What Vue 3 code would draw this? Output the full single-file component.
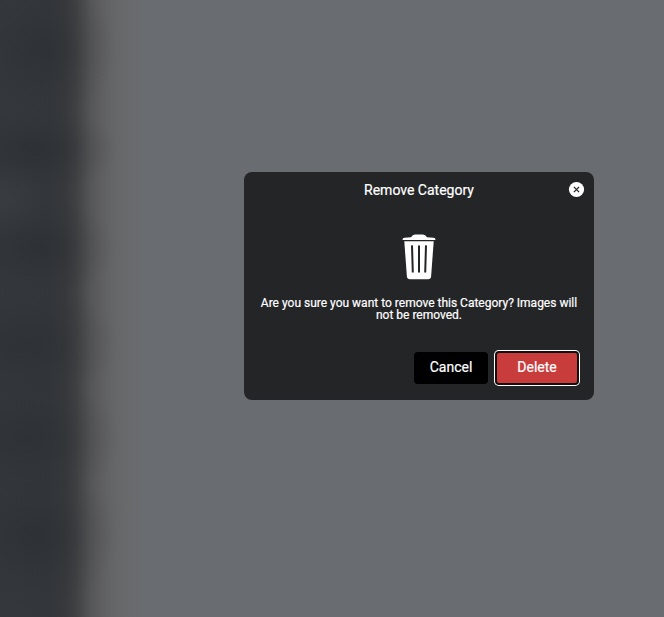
<script setup>
import { ref } from 'vue'

const title = ref('Remove Category')
const message = ref('Are you sure you want to remove this Category? Images will not be removed.')
</script>

<template>
  <main class="backdrop">
    <section class="dialog" role="dialog" aria-modal="true">
      <header class="header">
        <h1 class="title">{{ title }}</h1>
        <button class="close" type="button">
          <svg viewBox="0 0 16 16" width="16" height="16">
            <circle cx="8.5" cy="7.5" r="7.6" fill="#fff" />
            <path d="M5.9 4.9 11.1 10.1M11.1 4.9 5.9 10.1" stroke="#242527" stroke-width="1.3" />
          </svg>
        </button>
      </header>
      <div class="body">
        <svg class="trash" viewBox="0 0 34 47" width="34" height="47">
          <path fill="#fff" d="M.6 7V6.3Q.6 4.8 2.4 4.7L9 4.3Q10.6 1.4 13 1.4H21Q23.4 1.4 25 4.3L31.6 4.7Q33.4 4.8 33.4 6.3V7Z" />
          <path fill="#fff" d="M2.3 8.3H31.7L29.1 43.6Q28.8 46.3 26.1 46.3H7.9Q5.2 46.3 4.9 43.6Z" />
          <path d="M10 12.4 10.8 39.5M17 12.4V39.5M24 12.4 23.2 39.5" stroke="#242527" stroke-width="2" fill="none" />
        </svg>
        <p class="message">{{ message }}</p>
      </div>
      <footer class="actions">
        <button class="button cancel" type="button">Cancel</button>
        <button class="button delete" type="button">Delete</button>
      </footer>
    </section>
  </main>
</template>

<style>
body {
  margin: 0;
  background: #696c70;
}
</style>

<style scoped>
.backdrop {
  box-sizing: border-box;
  height: 617px;
  padding: 172px 70px 0 244px;
  overflow: hidden;
  font-family: Roboto, sans-serif;
  background:
    radial-gradient(ellipse 45px 38px at 0 200px, rgba(66, 70, 74, 0.35), transparent),
    radial-gradient(ellipse 75px 65px at 42px 50px, rgba(42, 45, 49, 0.5), rgba(42, 45, 49, 0.15) 55%, transparent),
    radial-gradient(ellipse 85px 42px at 34px 150px, rgba(42, 45, 49, 0.6), rgba(42, 45, 49, 0.15) 60%, transparent),
    radial-gradient(ellipse 80px 50px at 36px 248px, rgba(42, 45, 49, 0.6), rgba(42, 45, 49, 0.15) 60%, transparent),
    radial-gradient(ellipse 95px 60px at 24px 345px, rgba(42, 45, 49, 0.55), rgba(42, 45, 49, 0.15) 60%, transparent),
    radial-gradient(ellipse 95px 65px at 26px 438px, rgba(42, 45, 49, 0.55), rgba(42, 45, 49, 0.15) 60%, transparent),
    radial-gradient(ellipse 85px 70px at 34px 535px, rgba(42, 45, 49, 0.6), rgba(42, 45, 49, 0.15) 60%, transparent),
    linear-gradient(90deg, #34383c 0, #33373b 50px, #37393c 66px, #3f4143 76px, #4b4c4e 84px, #555657 91px, #5e5e60 101px, #646567 112px, #68696b 124px, #696b6e 136px, #696c70 144px);
}

.dialog {
  display: flex;
  flex-direction: column;
  box-sizing: border-box;
  width: 350px;
  height: 228px;
  border-radius: 8px;
  color: #fff;
  background: #242527;
  -webkit-text-stroke: 0.2px currentColor;
}

.header {
  display: grid;
  grid-template-columns: 26px 1fr 26px;
  align-items: center;
  height: 36px;
}

.title {
  grid-column: 2;
  margin: 0;
  font-size: 14px;
  font-weight: 400;
  line-height: 16px;
  text-align: center;
}

button {
  border: 0;
  padding: 0;
  font-family: inherit;
  color: #fff;
}

.close {
  width: 16px;
  height: 16px;
  background: none;
}

.close svg,
.trash {
  display: block;
}

.close svg {
  overflow: visible;
}

.body {
  display: flex;
  flex-direction: column;
  align-items: center;
  padding: 25px 15px 0;
}

.message {
  margin: 17px 0 0;
  font-size: 12px;
  line-height: 12px;
  text-align: center;
}

.actions {
  display: flex;
  justify-content: flex-end;
  align-items: center;
  gap: 9px;
  margin-top: auto;
  padding: 0 17px 16px 0;
}

.button {
  border-radius: 4px;
  padding-bottom: 2px;
  font-size: 14px;
  font-weight: 400;
  line-height: 16px;
}

.cancel {
  width: 74px;
  height: 32px;
  background: #000;
}

.delete {
  width: 80px;
  height: 30px;
  border-radius: 2px;
  background: #c83c3c;
  box-shadow: 0 0 0 2px #101010, 0 0 0 3px #fff;
}
</style>
